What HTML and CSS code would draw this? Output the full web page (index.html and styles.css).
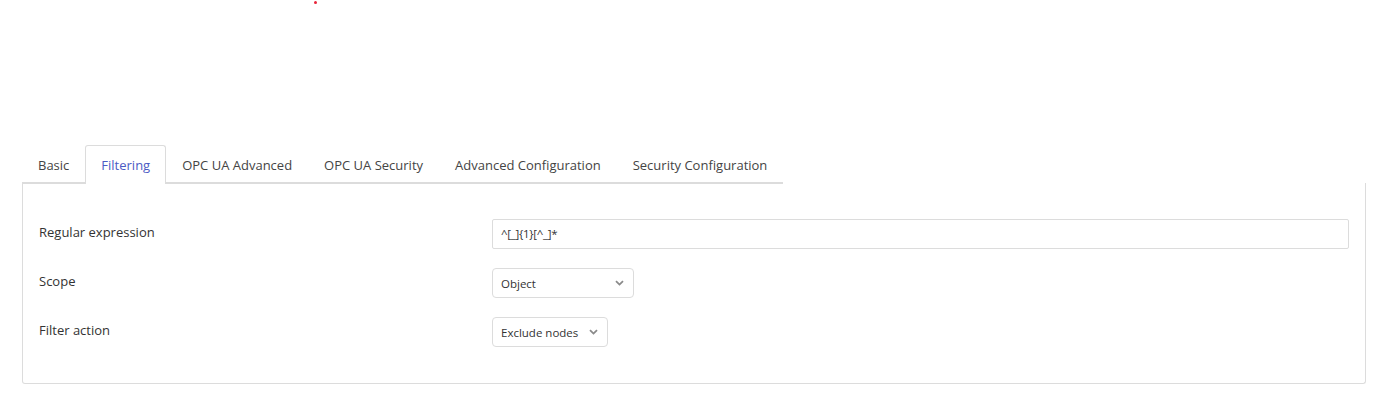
FILE: index.html
```html
<!DOCTYPE html>
<html lang="en">
<head>
<meta charset="utf-8">
<title>Filtering</title>
<link rel="stylesheet" href="styles.css">
</head>
<body>
<div class="marker"></div>
<div class="page">
  <div class="tabs">
    <div class="tab">Basic</div>
    <div class="tab active">Filtering</div>
    <div class="tab">OPC UA Advanced</div>
    <div class="tab">OPC UA Security</div>
    <div class="tab">Advanced Configuration</div>
    <div class="tab">Security Configuration</div>
  </div>
  <div class="panel">
    <div class="form">
      <label class="label">Regular expression</label>
      <div class="field"><div class="input">^[_]{1}[^_]*</div></div>
      <label class="label">Scope</label>
      <div class="field"><div class="select select-scope"><span>Object</span><svg class="chev" width="9" height="6" viewBox="0 0 9 6"><path d="M1 1.2 L4.5 4.6 L8 1.2" fill="none" stroke="#8a8a8a" stroke-width="1.8"/></svg></div></div>
      <label class="label">Filter action</label>
      <div class="field"><div class="select select-action"><span>Exclude nodes</span><svg class="chev" width="9" height="6" viewBox="0 0 9 6"><path d="M1 1.2 L4.5 4.6 L8 1.2" fill="none" stroke="#8a8a8a" stroke-width="1.8"/></svg></div></div>
    </div>
  </div>
</div>
</body>
</html>
```
FILE: styles.css
```css
* { box-sizing: border-box; }
html, body { margin: 0; padding: 0; background: #fff; }
body {
  font-family: "Open Sans", "Noto Sans", sans-serif;
  font-size: 13px;
  color: #333;
  position: relative;
  height: 401px;
  overflow: hidden;
}
.marker {
  position: absolute;
  left: 314px;
  top: 1px;
  width: 3px;
  height: 3px;
  border-radius: 50%;
  background: #e8243a;
}
.page {
  padding: 145px 17px 0 22px;
}
.tabs {
  display: inline-flex;
  border-bottom: 2px solid #dcdcdc;
  height: 39px;
}
.tab {
  padding: 0 15px;
  height: 37px;
  line-height: 38px;
  color: #444;
  font-size: 13px;
  border: 1px solid transparent;
  border-bottom: none;
  border-radius: 3px 3px 0 0;
  white-space: nowrap;
}
.tab.active {
  color: #4b5bc4;
  border-color: #dcdcdc;
  background: #fff;
  height: 39px;
  margin-bottom: -2px;
  position: relative;
}
.panel {
  border: 1px solid #dcdcdc;
  border-top: none;
  border-radius: 0 0 3px 3px;
  padding: 36px 16px 36px 16px;
  margin-top: -1px;
}
.form {
  display: grid;
  grid-template-columns: 453px 1fr;
  row-gap: 19px;
  align-items: center;
}
.label {
  font-size: 13px;
  color: #333;
  margin-bottom: 4px;
}
.field { display: flex; }
.input {
  width: 100%;
  height: 30px;
  border: 1px solid #dcdcdc;
  border-radius: 2px;
  padding: 0 8px;
  line-height: 28px;
  font-size: 11.5px;
  color: #333;
  letter-spacing: -0.3px;
}
.select {
  height: 30px;
  border: 1px solid #dcdcdc;
  border-radius: 4px;
  padding: 0 9px 0 8px;
  display: flex;
  align-items: center;
  justify-content: space-between;
  font-size: 11.5px;
  color: #333;
}
.select-scope { width: 142px; }
.select-action { width: 116px; }
.chev { flex: none; }
```
